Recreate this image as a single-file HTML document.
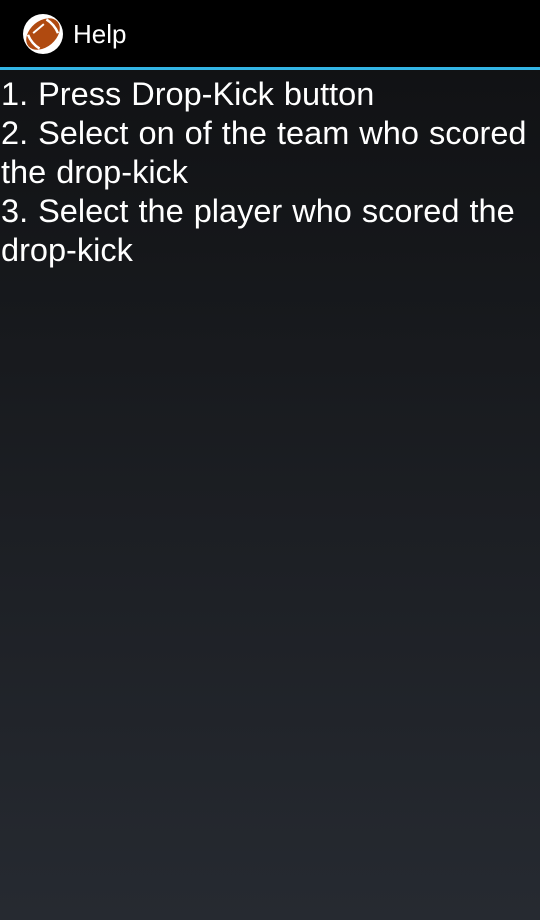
<!DOCTYPE html>
<html><head><meta charset="utf-8"><style>
html,body{margin:0;padding:0;}
body{width:540px;height:920px;overflow:hidden;background:linear-gradient(#0f1012,#262a31);font-family:"Liberation Sans",sans-serif;color:#fff;}
.bar{height:67px;background:#000;position:relative;}
.bar .t{position:absolute;left:73px;top:19px;font-size:26px;}
.line{height:3px;background:#33b5e5;}
.c{font-size:32.5px;line-height:39px;padding-left:1px;margin-top:5px;word-spacing:1px;}
</style></head><body>
<div class="bar">
<svg style="position:absolute;left:22px;top:13px" width="42" height="42" viewBox="0 0 42 42">
<ellipse cx="21" cy="21" rx="20" ry="20" fill="#fff"/>
<g transform="rotate(-40 21 21)">
<ellipse cx="21" cy="21" rx="19" ry="13" fill="#b04a10"/>
<path d="M9 12 Q6 21 9 30" stroke="#fff" stroke-width="2.5" fill="none"/>
<path d="M33 12 Q36 21 33 30" stroke="#fff" stroke-width="2.5" fill="none"/>
<line x1="14" y1="14" x2="28" y2="14" stroke="#fff" stroke-width="2"/>
</g></svg>
<div class="t">Help</div>
</div>
<div class="line"></div>
<div class="c">1. Press Drop-Kick button<br>2. Select on of the team who scored the drop-kick<br>3. Select the player who scored the drop-kick</div>
</body></html>
